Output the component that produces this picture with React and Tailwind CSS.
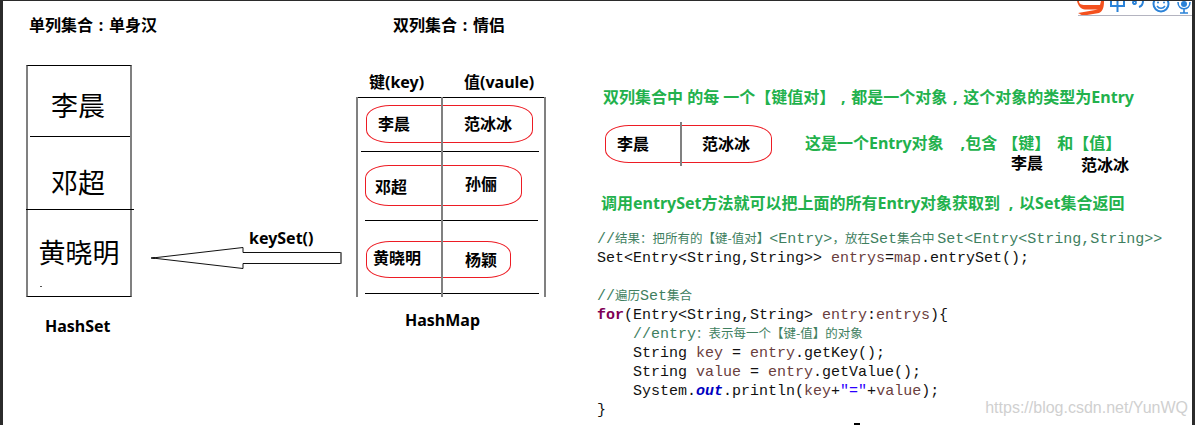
const sans = "font-['Noto_Sans','Noto_Sans_CJK_SC',sans-serif]";
const pill = "flex items-center border border-[#ed1c24] rounded-[24px/13px] text-[16px] font-bold leading-none";

function Sep({ ch }) {
  return <span className="inline-block w-[16px] text-center">{ch}</span>;
}

function Arrow() {
  return (
    <svg className="ml-[18px] -mt-[1px] block" width="194" height="26" viewBox="0 0 194 26" fill="none">
      <path d="M2.5 13 L93 2.5 V7.5 H191 V18.5 H93 V23.5 Z" stroke="#111" strokeWidth="1" fill="#fff" />
      <path d="M1 13 H5" stroke="#111" strokeWidth="1.5" />
      <path d="M191 7.5 V18.5" stroke="#777" strokeWidth="2" />
    </svg>
  );
}

function HashSetColumn() {
  return (
    <div className="flex flex-col w-[106px] ml-[23px] pt-[16px] shrink-0">
      <div className="ml-[3px] mb-[32px] whitespace-nowrap text-[16px] leading-none font-bold">
        单列集合<Sep ch=":" />单身汉
      </div>
      <div className="h-[232px] flex flex-col border-x-2 border-x-[#808080] border-y border-y-black text-[27px] leading-none">
        <div className="h-[70px] pt-[10px] pr-[2px] flex items-center justify-center">李晨</div>
        <div className="h-px bg-black ml-[2px] shrink-0" />
        <div className="h-[73px] pt-[18px] pr-[2px] flex items-center justify-center">邓超</div>
        <div className="h-px bg-black -ml-[2px] -mr-[4px] shrink-0" />
        <div className="h-[86px] pb-[2px] flex items-center justify-center relative">
          黄晓明
          <span className="absolute left-[12px] top-[76px] w-[2px] h-px bg-[#555]" />
        </div>
      </div>
      <div className="mt-[21px] ml-[19px] text-[16px] leading-none font-bold">HashSet</div>
    </div>
  );
}

function ArrowColumn() {
  return (
    <div className="flex flex-col w-[224px] pt-[229px] shrink-0">
      <div className="ml-[117px] text-[16px] leading-none font-bold">keySet()</div>
      <Arrow />
    </div>
  );
}

function HashMapColumn() {
  return (
    <div className="flex flex-col w-[190px] pt-[16px] shrink-0">
      <div className="ml-[37px] mb-[41px] whitespace-nowrap text-[16px] leading-none font-bold">
        双列集合<Sep ch=":" />情侣
      </div>
      <div className="flex mb-[7px] text-[16px] leading-none font-bold whitespace-nowrap">
        <div className="w-[108px] pl-[13px]">键(key)</div>
        <div>值(vaule)</div>
      </div>
      <div className="relative h-[200px] border-x-2 border-x-[#808080] flex flex-col">
        <div className="h-px bg-black" />
        <div className="absolute left-[83px] top-0 bottom-0 w-[2px] bg-[#808080]" />
        <div className="pt-[7px] pl-[8px]">
          <div className={"w-[167px] h-[38px] " + pill}>
            <div className="w-[97px] pl-[11px]">李晨</div>
            <div>范冰冰</div>
          </div>
        </div>
        <div className="mt-[8px] ml-[3px] w-[178px] h-px bg-black" />
        <div className="pt-[13px] pl-[7px]">
          <div className={"w-[157px] h-[41px] " + pill}>
            <div className="w-[99px] pl-[9px] pt-[3px]">邓超</div>
            <div className="pb-[3px]">孙俪</div>
          </div>
        </div>
        <div className="mt-[14px] ml-[7px] w-[173px] h-px bg-black" />
        <div className="pt-[20px] pl-[8px]">
          <div className={"w-[145px] h-[37px] " + pill}>
            <div className="w-[98px] pl-[6px] pb-[3px]">黄晓明</div>
            <div className="pt-[1px]">杨颖</div>
          </div>
        </div>
        <div className="mt-[15px] ml-[7px] w-[174px] h-px bg-black" />
      </div>
      <div className="mt-[15px] ml-[49px] text-[16px] leading-none font-bold">HashMap</div>
    </div>
  );
}

function EntryRow() {
  return (
    <div className="flex items-start mt-[20px] ml-[2px] h-[70px]">
      <div className={"relative w-[167px] h-[38px] shrink-0 " + pill}>
        <div className="absolute left-[74px] -top-[4px] w-[2px] h-[44px] bg-[#808080]" />
        <div className="w-[96px] pl-[11px]">李晨</div>
        <div>范冰冰</div>
      </div>
      <div className="ml-[33px] pt-[10px] flex flex-col text-[16px] leading-none font-bold whitespace-nowrap">
        <div className="flex text-[#22b14c]">
          <span>这是一个Entry对象</span>
          <span className="ml-[17px]">,包含</span>
          <span className="ml-[5px]">【键】</span>
          <span className="ml-[7px]">和【值】</span>
        </div>
        <div className="flex mt-[4px] ml-[206px]">
          <div className="w-[70px]">李晨</div>
          <div className="pt-[2px]">范冰冰</div>
        </div>
      </div>
    </div>
  );
}

function CodeBlock() {
  const c = "h-[19px] text-[#3f7f5f]";
  const l = "h-[19px]";
  const v = "text-[#6a3e3e]";
  const cjk = "font-['Noto_Sans_CJK_SC',sans-serif] text-[12.5px] leading-none";
  return (
    <div className="mt-[19px] -ml-[6px] font-['Liberation_Mono',monospace] text-[15px] leading-[19px] text-[#111] whitespace-pre">
      <div className={c}>//<span className={cjk}>结果：把所有的【键-值对】</span>{"<Entry>"}<span className={cjk}>，放在</span>Set<span className={cjk}>集合中 </span>{"Set<Entry<String,String>>"}</div>
      <div className={l}>{"Set<Entry<String,String>> "}<span className={v}>entrys</span>=<span className={v}>map</span>.entrySet();</div>
      <div className={l} />
      <div className={c}>//<span className={cjk}>遍历</span>Set<span className={cjk}>集合</span></div>
      <div className={l}><span className="font-bold text-[#7f0055]">for</span>{"(Entry<String,String> "}<span className={v}>entry</span>:<span className={v}>entrys</span>{"){"}</div>
      <div className={c}>{"    //entry"}<span className={cjk}>：表示每一个【键-值】的对象</span></div>
      <div className={l}>{"    String "}<span className={v}>key</span> = <span className={v}>entry</span>.getKey();</div>
      <div className={l}>{"    String "}<span className={v}>value</span> = <span className={v}>entry</span>.getValue();</div>
      <div className={l}>{"    System."}<span className="font-bold italic text-[#0000c0]">out</span>.println(<span className={v}>key</span>+<span className="text-[#2a00ff]">"="</span>+<span className={v}>value</span>);</div>
      <div className={l}>{"}"}</div>
    </div>
  );
}

function RightColumn() {
  return (
    <div className="flex flex-col pl-[57px] pt-[88px] min-w-0 flex-1">
      <div className="text-[16px] leading-none font-bold text-[#22b14c] whitespace-nowrap">
        双列集合中 的每 一个【键值对】<Sep ch="," />都是一个对象<Sep ch="," />这个对象的类型为Entry
      </div>
      <EntryRow />
      <div className="-ml-[2px] text-[16px] leading-none font-bold text-[#22b14c] whitespace-nowrap">
        调用entrySet方法就可以把上面的所有Entry对象获取到<span className="ml-[3px]"><Sep ch="," /></span>以Set集合返回
      </div>
      <CodeBlock />
    </div>
  );
}

function Tray() {
  return (
    <svg className="absolute right-0 top-0" width="116" height="16" viewBox="0 0 116 16" fill="none">
      <path d="M3 0 C3 3 5 4 9 4 H24 L25 0 H28 C28 6 27 10 23 12 L8 14.5 C6 14.5 4 13 2 12 L22 8.5 H9 C5 8 2 5 1 0 Z" fill="#f4511e" />
      <path d="M35 -2 H48 V5 H35 Z M41.5 -2 V11" stroke="#2a82d8" strokeWidth="2" />
      <path d="M60 1.5 A1.5 1.5 0 1 0 60 1.6 M67 0 C67 3 66 5 63 6" stroke="#2a82d8" strokeWidth="2" />
      <circle cx="85" cy="3" r="7.5" stroke="#2a82d8" strokeWidth="2" />
      <circle cx="82" cy="1.5" r="1" fill="#2a82d8" />
      <circle cx="88" cy="1.5" r="1" fill="#2a82d8" />
      <path d="M81 5 C83 8 87 8 89 5" stroke="#2a82d8" strokeWidth="1.5" />
      <rect x="105" y="0" width="6" height="6" rx="3" fill="#2a82d8" />
      <path d="M102 1 C102 10 114 10 114 1 M108 8 V12 M104 12 H112" stroke="#2a82d8" strokeWidth="1.6" />
      <path d="M2 14.5 H116" stroke="#b4b4c0" strokeWidth="1" />
    </svg>
  );
}

export default function App() {
  return (
    <div className={"relative flex w-[1195px] h-[425px] bg-white overflow-hidden text-black border-t border-t-[#2b2b2b] border-x-[3px] border-x-[#2b2b2b] " + sans}>
      <HashSetColumn />
      <ArrowColumn />
      <HashMapColumn />
      <RightColumn />
      <Tray />
      <div className="absolute right-[4px] bottom-[9px] whitespace-nowrap text-[16px] leading-none text-[#d0d0d0] font-['Liberation_Sans',sans-serif]">https://blog.csdn.net/YunWQ</div>
      <div className="absolute left-[851px] bottom-0 w-[6px] h-[2px] bg-black" />
    </div>
  );
}
